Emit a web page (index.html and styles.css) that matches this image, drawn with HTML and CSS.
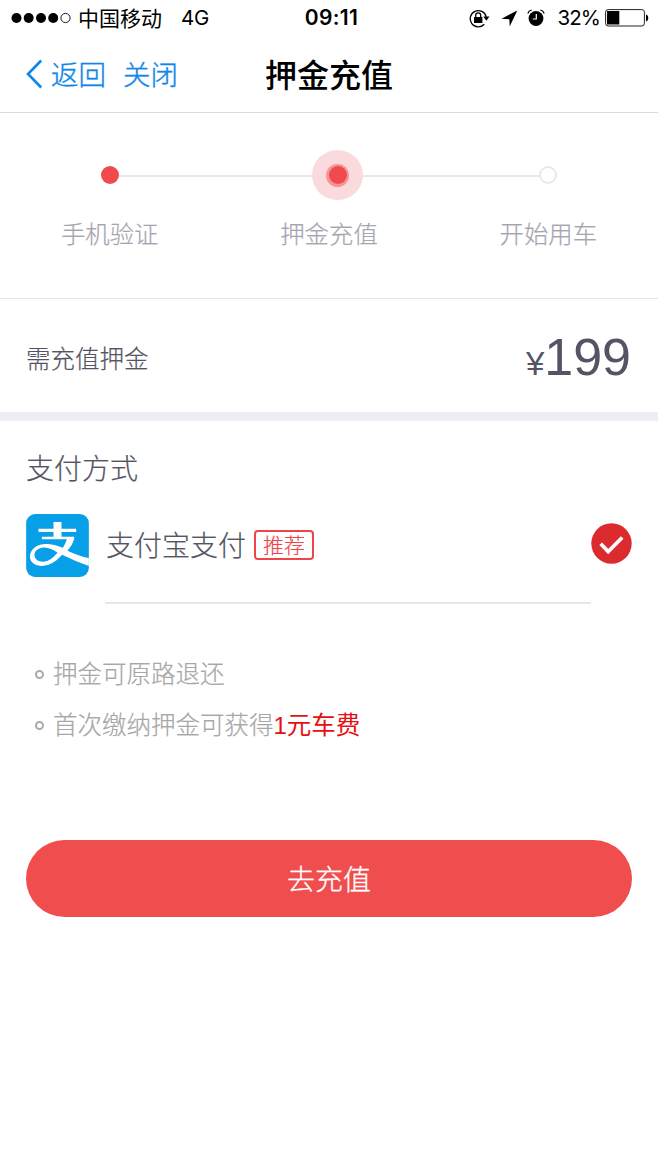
FILE: index.html
```html
<!DOCTYPE html>
<html lang="zh-CN">
<head>
<meta charset="utf-8">
<title>押金充值</title>
<link rel="stylesheet" href="styles.css">
</head>
<body>
<header class="status">
  <div class="status-left">
    <svg class="signal" width="60" height="12" viewBox="0 0 60 12"><g fill="#000"><circle cx="5.5" cy="6" r="5"/><circle cx="17.7" cy="6" r="5"/><circle cx="30" cy="6" r="5"/><circle cx="42.2" cy="6" r="5"/></g><circle cx="54.5" cy="6" r="4.6" fill="none" stroke="#000" stroke-width=".9"/></svg>
    <span class="carrier">中国移动</span><span class="network">4G</span>
  </div>
  <div class="clock">09:11</div>
  <div class="status-right">
    <svg class="lock" width="21" height="19" viewBox="0 0 21 19"><path d="M15.300 15.200A8.100 8.100 0 1 1 17.200 7.800" fill="none" stroke="#000" stroke-width="1.300"/><path d="M14.300 7.600h6.200l-3.100 4.100z"/><rect x="5" y="8" width="8.400" height="6"/><path d="M6.700 8V6.300a2.500 2.500 0 0 1 5 0V8" fill="none" stroke="#000" stroke-width="1.300"/></svg>
    <svg class="arrow" width="17" height="17" viewBox="0 0 17 17"><path d="M16.300.5 8.700 16.500 8.300 9.200.5 8.700z"/></svg>
    <svg class="alarm" width="18" height="18" viewBox="0 0 18 18"><circle cx="9" cy="9.500" r="7.400"/><path d="M9.300 5v5H5.800" fill="none" stroke="#fff" stroke-width="1.200"/><path d="M.8 4.500Q1.700 1.700 4.700 1M17.200 4.500Q16.300 1.700 13.300 1" fill="none" stroke="#000" stroke-width="1.200"/></svg>
    <span class="percent">32%</span>
    <svg class="battery" width="44" height="18" viewBox="0 0 44 18"><rect x=".6" y=".6" width="38.800" height="16.400" rx="2.600" fill="#fff" stroke="#222" stroke-width="1"/><path d="M2 2h12.300v13.600H2zM41 5.500c3 .7 3 6.300 0 7z"/></svg>
  </div>
</header>

<nav class="nav">
  <div class="nav-links">
    <svg class="chevron" width="17" height="30" viewBox="0 0 17 30"><path d="M15.200 1.500 2 15l13.200 13.500" fill="none" stroke="#0f87ea" stroke-width="2.600"/></svg>
    <a class="back">返回</a><a class="close">关闭</a>
  </div>
  <h1 class="title">押金充值</h1>
  <div></div>
</nav>

<main>
  <section class="steps">
    <div class="track">
      <i class="dot done"></i><i class="line first"></i>
      <i class="halo"><i class="ring"><i class="dot done"></i></i></i>
      <i class="line second"></i><i class="dot pending"></i>
    </div>
    <div class="labels"><span>手机验证</span><span>押金充值</span><span>开始用车</span></div>
  </section>

  <section class="deposit">
    <span class="deposit-label">需充值押金</span>
    <span class="amount"><span class="yen">¥</span>199</span>
  </section>

  <section class="payment">
    <h2 class="heading">支付方式</h2>
    <div class="method">
      <svg class="logo" width="63" height="63" viewBox="48 42 188 189">
        <rect x="48" y="42" width="188" height="189" rx="27" fill="#069fe8"/>
        <path d="M130 66h24v20h44v10h-44v14h38v8q-6 20-20 34 34 16 64 22v24q-40-14-80-34-31 35-63 34c-26-2-37-17-33-35 5-22 28-33 52-31 17 1 32 6 46 11q8-11 12-25h-75v-8h35V96H85V86h45zM142 158c-15-10-30-17-45-15-16 2-25 12-24 23 1 13 13 20 27 19 19-2 29-13 42-27z" fill="#fff" fill-rule="evenodd"/>
      </svg>
      <span class="method-name">支付宝支付</span><span class="tag">推荐</span>
      <svg class="check" width="41" height="41" viewBox="0 0 41 41"><circle cx="20.500" cy="20.500" r="20.200" fill="#dc2b2e"/><path d="m9.700 20.800 7.500 7.700 14-14" fill="none" stroke="#fff" stroke-width="3.700"/></svg>
    </div>
    <div class="divider"></div>
    <ul class="notes">
      <li><i class="bullet"></i><span>押金可原路退还</span></li>
      <li><i class="bullet"></i><span>首次缴纳押金可获得<em><b class="one">1</b>元车费</em></span></li>
    </ul>
  </section>
  <button class="submit">去充值</button>
</main>
</body>
</html>
```

FILE: styles.css
```css
* { box-sizing: border-box; }
body {
  margin: 0;
  background: #fff;
  color: #545465;
  font-family: "Noto Sans CJK SC", sans-serif;
  font-weight: 300;
  -webkit-text-stroke: .2px currentColor;
}
i, em { font-style: normal; }
i, svg { display: block; flex: none; }

.status {
  display: grid;
  grid-template-columns: 1fr auto 1fr;
  align-items: center;
  height: 36px;
  padding: 0 9px 0 11px;
  color: #000;
  font-size: 21px;
  font-weight: 400;
  line-height: 36px;
  -webkit-text-stroke: 0;
}
.status-left, .status-right { display: flex; align-items: center; }
.status-right { justify-content: flex-end; }
.carrier { margin: -2px 0 0 7px; }
.network { margin-left: 19px; font: 400 20.5px/36px Inter, sans-serif; letter-spacing: -.3px; }
.clock { padding-left: 3px; font: 600 21px/36px Inter, sans-serif; letter-spacing: .4px; }
.arrow { margin-left: 11px; }
.alarm { margin-left: 9px; }
.percent { margin: 0 5px 0 12px; font: 400 20.5px/36px Inter, sans-serif; letter-spacing: -.9px; }

.nav {
  display: grid;
  grid-template-columns: 1fr auto 1fr;
  align-items: center;
  height: 77px;
  padding: 0 26px;
  border-bottom: 1px solid #dcdcdc;
}
.nav-links { display: flex; align-items: center; color: #0f87ea; font-size: 27.5px; line-height: 40px; -webkit-text-stroke: .4px currentColor; }
.back { margin: -2px 0 0 8px; }
.close { margin: -2px 0 0 17px; }
.title { margin: 0; color: #000; font-size: 32px; font-weight: 500; line-height: 74px; padding-bottom: 2px; -webkit-text-stroke: 0; }

.steps { height: 186px; padding-top: 37px; border-bottom: 1px solid #e5e5e5; }
.track { display: flex; align-items: center; height: 50px; padding: 0 101px; }
.dot { width: 18px; height: 18px; border-radius: 50%; }
.done { background: #ef4b4e; }
.pending { border: 2px solid #e9e9e9; }
.line { height: 2px; margin-top: 2px; background: #e9e9e9; }
.first { flex: 193 0 0; }
.second { flex: 176 0 0; }
.halo { display: grid; place-items: center; width: 51px; height: 50px; border-radius: 50%; background: #fadadc; }
.ring { display: grid; place-items: center; width: 23px; height: 23px; border-radius: 50%; background: #f49497; }
.labels {
  display: grid;
  grid-template-columns: repeat(3, 1fr);
  margin-top: 15px;
  color: #a5a5b0;
  font-size: 24.400px;
  line-height: 36px;
  text-align: center;
}

.deposit {
  display: flex;
  align-items: center;
  justify-content: space-between;
  height: 122px;
  padding: 3px 27px 0 26px;
  border-bottom: 9px solid #eeedf3;
  font-size: 24.5px;
}
.amount { padding-top: 6px; font: 400 52px/60px "Liberation Sans", sans-serif; -webkit-text-stroke: 0; }
.yen { font-size: 33px; }

.payment { padding: 0 26px; }
.heading { margin: 0; padding-top: 25px; font-size: 28px; font-weight: 300; line-height: 42px; }
.method { display: flex; align-items: center; height: 63px; margin-top: 26px; }
.method-name { margin: -3px 0 0 17px; font-size: 28px; }
.tag {
  width: 60px;
  height: 30px;
  margin: -2px 0 0 8px;
  border: 2px solid #f04548;
  border-radius: 4px;
  color: #f04548;
  font-size: 21px;
  line-height: 25px;
  text-align: center;
}
.check { margin: -5px 0 0 auto; }
.divider { height: 2px; margin: 25px 41px 0 79px; background: #e6e6e6; }
.notes { margin: 43px 0 0; padding: 0 0 0 9px; color: #a7a7a7; font-size: 24.5px; list-style: none; }
.notes li { display: flex; align-items: center; height: 51px; }
.bullet { width: 9px; height: 9px; margin: 4px 9px 0 0; border: 2px solid #aaa; border-radius: 50%; }
.notes em { color: #e60f13; font-weight: 400; -webkit-text-stroke: 0; }
.one { font: 400 24px "Liberation Sans", sans-serif; }
.submit {
  display: block;
  width: 606px;
  height: 77px;
  margin: 91px 26px 0;
  padding: 0;
  border: 0;
  border-radius: 39px;
  background: #f04d4e;
  color: #fff;
  font: 300 28px/77px "Noto Sans CJK SC", sans-serif;
  -webkit-text-stroke: .3px #fff;
}
```
